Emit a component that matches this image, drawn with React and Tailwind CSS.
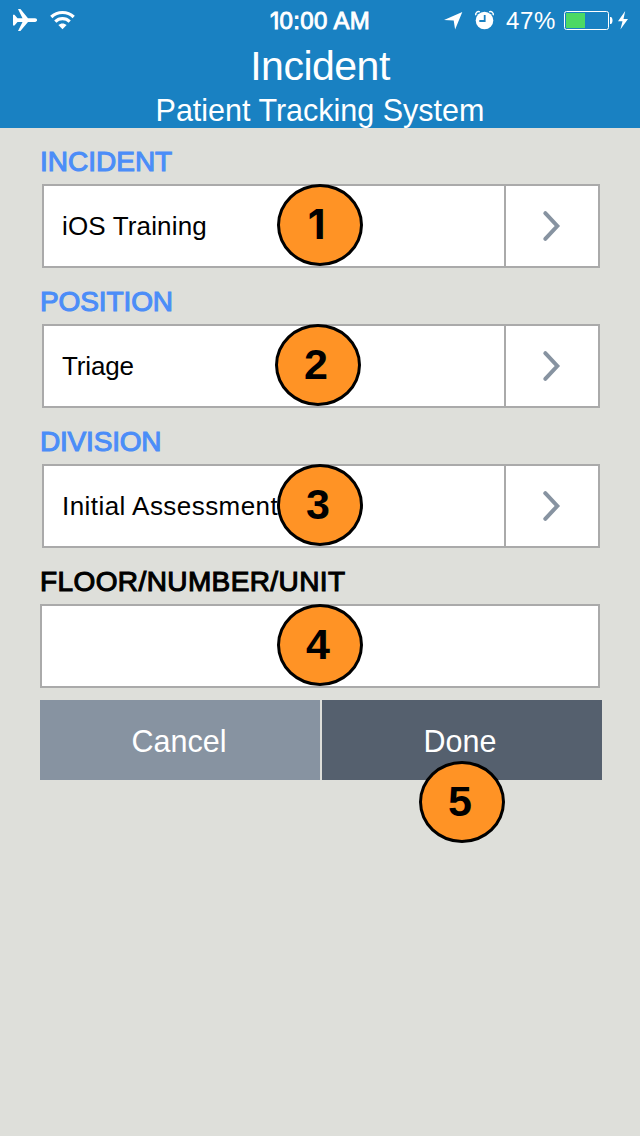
import React from "react";

const Badge = ({ n, className }) => (
  <div
    className={`absolute flex h-[82px] w-[86px] items-center justify-center rounded-[50%] border-[3px] border-black bg-[#ff9325] pb-0.5 font-bold text-black ${
      n === 1 ? "pr-[7px] font-['Inter',sans-serif] text-[41px]" : "pr-1 text-[43px]"
    } leading-none ${className}`}
  >
    {n}
  </div>
);

const Label = ({ children, className }) => (
  <div
    className={`h-14 pt-[11px] text-[28px] leading-[45px] whitespace-nowrap [-webkit-text-stroke:1.1px_currentColor] ${className}`}
  >
    {children}
  </div>
);

const Chevron = () => (
  <svg width="92" height="80" viewBox="0 0 92 80" fill="none" stroke="#8793a1" strokeWidth="4">
    <path d="M39.3 27.2 51.3 40 39.3 52.8" strokeLinecap="round" />
  </svg>
);

const Field = ({ label, value, n, badge, labelClass, valueClass }) => (
  <section>
    <Label className={`text-[#4b8df8] ${labelClass}`}>{label}</Label>
    <div className="relative ml-0.5 flex h-[84px] w-[558px] border-2 border-[#aaaaaa] bg-white">
      <div className={`flex-1 pl-[18px] text-[26px] leading-[80px] whitespace-nowrap text-black ${valueClass}`}>
        {value}
      </div>
      <div className="w-[94px] border-l-2 border-[#aaaaaa]">
        <Chevron />
      </div>
      <Badge n={n} className={badge} />
    </div>
  </section>
);

const StatusBar = () => (
  <div className="flex h-10 items-center justify-between text-[24px] leading-10">
    <svg className="w-[220px]" width="220" height="40" viewBox="0 0 220 40" fill="#fff">
      <path d="M13 14.8h1.5l3 3.5h5L18 9h2.4l7.6 9.3h7c2.8 0 2.8 3.7 0 3.7h-7L20.4 31H18l4.5-9h-5l-3 3.4H13z" />
      <g fill="none" stroke="#fff" strokeWidth="3.2">
        <path d="M51.3 17c6.2-6 16.2-6 22.4 0" />
        <path d="M55.3 21.6c4.1-3.9 10.3-3.9 14.4 0" />
      </g>
      <path d="M58.4 25.1c2.2-2.2 6-2.2 8.2 0L62.5 29.3z" />
    </svg>
    <div className="pt-px whitespace-nowrap tracking-[0.35px] [-webkit-text-stroke:0.9px_white]">
      <span className="font-['Inter',sans-serif] text-[23px]">1</span>0:00 AM
    </div>
    <div className="flex w-[220px] justify-end">
      <svg width="65" height="40" viewBox="437 0 65 40" fill="#fff">
        <path d="M444 20.1 462.3 12 455.1 29.6 453.7 20.4z" />
        <circle cx="484.5" cy="20.5" r="8.8" />
        <g fill="none">
          <path d="M475.8 15.2c-.7-2.4 1.8-4.3 4.1-3.3M493.2 15.2c.7-2.4-1.8-4.3-4.1-3.3" stroke="#fff" strokeWidth="1.5" />
          <path d="M484.7 15v6h-5.4" stroke="#1981c2" strokeWidth="1.8" />
        </g>
      </svg>
      <span className="w-[62px] pt-0.5 pl-1 text-left leading-[38px] tracking-[0.6px]">47%</span>
      <svg width="76" height="40" viewBox="564 0 76 40">
        <rect x="564.5" y="11.5" width="44" height="18" rx="2" fill="none" stroke="#fff" />
        <path d="M566 13h19v15h-19z" fill="#4cd964" />
        <path d="M610 17h1.2c1.8 1.5 1.8 5.5 0 7H610zM625.2 11 618 21.3h4.5L620.4 29.5 628 18.9h-4.5z" fill="#fff" />
      </svg>
    </div>
  </div>
);

export default function App() {
  return (
    <div className="h-[1136px] w-[640px] overflow-hidden bg-[#dedfda] font-['Liberation_Sans',Arial,sans-serif]">
      <header className="h-32 bg-[#1981c2] text-center text-white">
        <StatusBar />
        <h1 className="text-[41px] leading-[52px] tracking-[-0.5px]">Incident</h1>
        <h2 className="pt-px text-[30.5px] leading-[35px]">Patient Tracking System</h2>
      </header>
      <main className="pl-10">
        <Field label="INCIDENT" value="iOS Training" n={1} badge="-top-0.5 left-[233px]" valueClass="tracking-[0.15px]" />
        <Field
          label="POSITION"
          value="Triage"
          n={2}
          badge="-top-0.5 left-[231px]"
          labelClass="tracking-[-0.1px]"
          valueClass="tracking-[-0.15px]"
        />
        <Field
          label="DIVISION"
          value="Initial Assessment"
          n={3}
          badge="-top-0.5 left-[233px]"
          labelClass="tracking-[-0.2px]"
          valueClass="tracking-[0.45px]"
        />
        <Label className="tracking-[0.4px] text-black">FLOOR/NUMBER/UNIT</Label>
        <div className="relative h-[84px] w-[560px] border-2 border-[#aaaaaa] bg-white">
          <Badge n={4} className="-top-0.5 left-[235px]" />
        </div>
        <div className="mt-3 flex gap-0.5 text-[30.5px] leading-[78px] text-white">
          <button className="h-20 w-[280px] bg-[#8793a1] pt-0.5 pr-0.5">Cancel</button>
          <div className="relative">
            <button className="h-20 w-[280px] bg-[#55606e] pt-0.5 pr-1">Done</button>
            <Badge n={5} className="top-[61px] left-[97px]" />
          </div>
        </div>
      </main>
    </div>
  );
}
